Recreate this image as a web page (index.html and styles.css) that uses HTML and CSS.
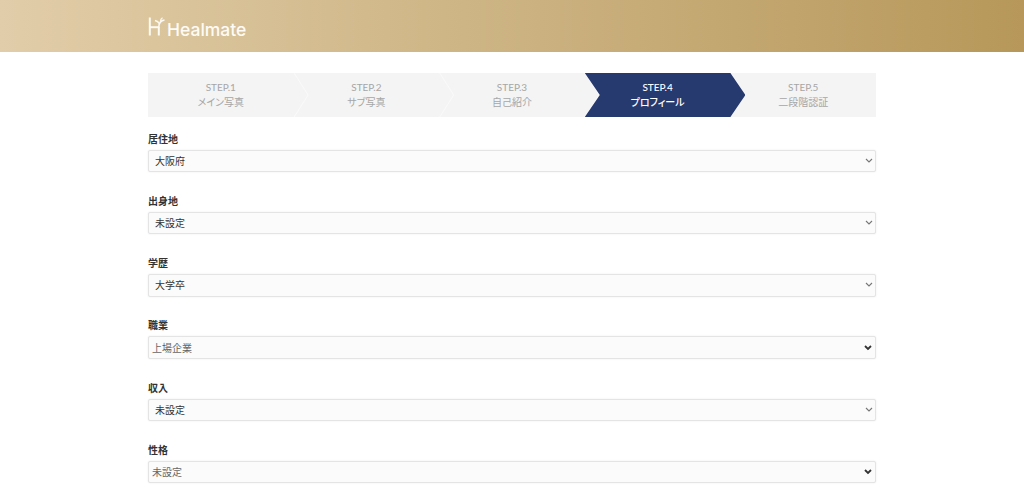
FILE: index.html
```html
<!DOCTYPE html>
<html lang="ja">
<head>
    <meta charset="UTF-8">
    <meta name="viewport" content="width=device-width, initial-scale=1.0">
    <title>Healmate</title>
    <link rel="stylesheet" href="styles.css">
</head>
<body>

    <!-- Header -->
    <header class="header">
        <div class="container">
            <a class="logo" href="#">
                <svg class="logo-mark" width="17" height="20" viewBox="0 0 17 20" fill="none" stroke="#fdfaf3" stroke-width="2">
                    <path d="M1.8 0.5V18.5"/>
                    <path d="M10.8 10V18.5"/>
                    <path d="M1.8 10.2H10.8"/>
                    <path d="M10.8 10.5C10.8 6.5 12.5 3.5 16.5 3" stroke-width="1.7"/>
                    <path d="M11.2 6.5C10.5 5 9 4 7 3.5" stroke-width="1.5"/>
                    <path d="M12.5 4.5C12.5 3 13.2 1.5 14.5 0.8" stroke-width="1.3"/>
                </svg>
                <span class="logo-text">Healmate</span>
            </a>
        </div>
    </header>

    <main class="container">
        <!-- Steps -->
        <ol class="steps">
            <li class="step"><span>STEP.1</span><span>メイン写真</span></li>
            <li class="step"><span>STEP.2</span><span>サブ写真</span></li>
            <li class="step"><span>STEP.3</span><span>自己紹介</span></li>
            <li class="step active"><span>STEP.4</span><span>プロフィール</span></li>
            <li class="step last"><span>STEP.5</span><span>二段階認証</span></li>
        </ol>

        <!-- Form -->
        <form class="form">
            <div class="field">
                <label>居住地</label>
                <select class="select"><option>大阪府</option></select>
            </div>
            <div class="field">
                <label>出身地</label>
                <select class="select"><option>未設定</option></select>
            </div>
            <div class="field">
                <label>学歴</label>
                <select class="select"><option>大学卒</option></select>
            </div>
            <div class="field">
                <label>職業</label>
                <select class="select native"><option>上場企業</option></select>
            </div>
            <div class="field">
                <label>収入</label>
                <select class="select"><option>未設定</option></select>
            </div>
            <div class="field">
                <label>性格</label>
                <select class="select native"><option>未設定</option></select>
            </div>
        </form>
    </main>

</body>
</html>
```
FILE: styles.css
```css
body, html {
    margin: 0;
    padding: 0;
    background-color: #fff;
    font-family: Lato, "Noto Sans CJK JP", sans-serif;
    overflow: hidden;
}

.container {
    width: 728px;
    margin: 0 auto;
}

/* Header */
.header {
    height: 52px;
    background: linear-gradient(90deg, #e1cda9, #b7985a);
}

.logo {
    display: flex;
    align-items: flex-end;
    gap: 2px;
    padding-top: 17px;
    color: #fff;
    text-decoration: none;
}

.logo-mark {
    display: block;
}

.logo-text {
    font-family: Inter, sans-serif;
    font-size: 17.5px;
    font-weight: 500;
    line-height: 15px;
    color: #fdfbf6;
}

/* Steps */
.steps {
    display: grid;
    grid-template-columns: repeat(5, 1fr);
    height: 44px;
    margin: 21px 0 0;
    padding: 0;
    list-style: none;
    background-color: #f4f4f4;
}

.step {
    position: relative;
    display: flex;
    flex-direction: column;
    justify-content: center;
    align-items: center;
    font-size: 10px;
    line-height: 15px;
    color: #a6a6a6;
    font-feature-settings: "palt";
}

.step span {
    position: relative;
    z-index: 2;
}

/* faint white chevron between the steps */
.step::after {
    content: "";
    position: absolute;
    top: 0;
    right: -15px;
    width: 15px;
    height: 100%;
    background-color: #fafafa;
    clip-path: polygon(0 0, 1px 0, 100% 50%, 1px 100%, 0 100%, 14px 50%);
}

.step.last::after {
    display: none;
}

.step.active {
    color: #fff;
    font-weight: 500;
}

.step.active::before {
    content: "";
    position: absolute;
    top: 0;
    left: 0;
    right: -15px;
    bottom: 0;
    z-index: 1;
    background-color: #273a70;
    clip-path: polygon(0 0, calc(100% - 15px) 0, 100% 50%, calc(100% - 15px) 100%, 0 100%, 15px 50%);
}

.step.active::after {
    display: none;
}

/* Form */
.form {
    margin-top: 12.8px;
}

.field {
    display: flex;
    flex-direction: column;
    height: 62.2px;
}

.field label {
    font-size: 10px;
    font-weight: 700;
    line-height: 19px;
    margin-bottom: 1px;
    color: #333;
}

.select {
    width: 100%;
    height: 22.5px;
    padding: 0 6px;
    border: 1px solid #e4e4e4;
    border-radius: 2px;
    background-color: #fbfbfb;
    background-image: url("data:image/svg+xml,%3Csvg xmlns='http://www.w3.org/2000/svg' width='8' height='6'%3E%3Cpath d='M1 1l3 3 3-3' fill='none' stroke='%23777' stroke-width='1.1'/%3E%3C/svg%3E");
    background-repeat: no-repeat;
    background-position: right 2px center;
    font-family: inherit;
    font-size: 10px;
    color: #333;
    appearance: none;
    box-shadow: 0 0 2px rgba(0, 0, 0, 0.08);
}

.select.native {
    padding: 0 3px;
    color: #666;
    background-position: right 3px center;
    background-image: url("data:image/svg+xml,%3Csvg xmlns='http://www.w3.org/2000/svg' width='8' height='6'%3E%3Cpath d='M1 1l3 3 3-3' fill='none' stroke='%23333' stroke-width='1.8'/%3E%3C/svg%3E");
}
```
